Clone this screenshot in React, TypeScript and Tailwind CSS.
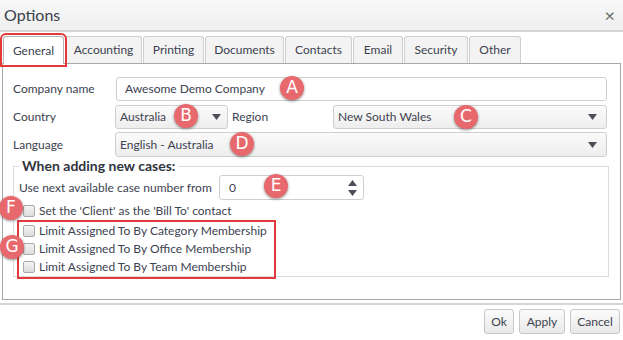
import React from "react";

const Marker = ({ l, x, y }: { l: string; x: number; y: number }) => (
  <div
    className="absolute w-[24px] h-[24px] rounded-full bg-[#e8696d] text-white flex items-center justify-center text-[17px] shadow-[0_1px_3px_rgba(0,0,0,0.45)]"
    style={{ left: x - 12, top: y - 12, fontFamily: "'DejaVu Sans', sans-serif" }}
  >
    {l}
  </div>
);

const Tri = () => (
  <svg width="9" height="6" viewBox="0 0 9 6" className="shrink-0">
    <path d="M0 0 L9 0 L4.5 6 Z" fill="#4a4f5a" />
  </svg>
);

const Check = () => (
  <div className="w-[12px] h-[12px] rounded-[2px] border border-[#a9a9a9] bg-gradient-to-b from-[#f4f4f4] to-[#dcdcdc] shrink-0" />
);

const tabs: [string, string][] = [
  ["General", "w-[61px]"],
  ["Accounting", "w-[77px]"],
  ["Printing", "w-[61px]"],
  ["Documents", "w-[79px]"],
  ["Contacts", "w-[67px]"],
  ["Email", "w-[50px]"],
  ["Security", "w-[64px]"],
  ["Other", "w-[52px]"],
];

const buttons: [string, string][] = [
  ["Ok", "w-[30px]"],
  ["Apply", "w-[46px]"],
  ["Cancel", "w-[50px]"],
];

export default function App() {
  return (
    <div
      className="relative w-[623px] h-[340px] bg-white text-[#3d4250] text-[12px] whitespace-nowrap overflow-hidden"
      style={{ fontFamily: "Lato, 'Liberation Sans', sans-serif" }}
    >
      {/* title bar */}
      <div className="h-[32px] flex items-center justify-between pl-[4px] pr-[8px] bg-gradient-to-b from-[#f8f8f8] to-[#efefef] border-b-2 border-[#d4d4d4]">
        <span className="text-[16px] text-[#3a3f4a]">Options</span>
        <span className="text-[18px] text-[#6a6a6a] leading-none">×</span>
      </div>

      {/* tabs */}
      <div className="flex pl-[3px] mt-[3px] h-[28px] items-end gap-[1px]">
        {tabs.map(([t, w], i) => (
          <div
            key={t}
            className={
              i === 0
                ? `${w} h-[28px] flex items-center justify-center bg-white border border-b-0 border-[#b5b5b5] rounded-t-[3px] relative z-10 -mb-[1px] outline-2 outline-[#e53935] outline-offset-[1px]`
                : `${w} h-[27px] flex items-center justify-center bg-[#f3f3f3] border border-b-0 border-[#cfcfcf] rounded-t-[3px]`
            }
          >
            {t}
          </div>
        ))}
      </div>

      {/* panel */}
      <div className="mx-[2px] h-[237px] border border-[#a8a8a8] pt-[13px] pl-[10px] pr-[13px]">
        <div className="flex items-center h-[24px]">
          <div className="w-[103px]">Company name</div>
          <div className="flex-1 h-[24px] border border-[#cfcfcf] rounded-[3px] px-[8px] flex items-center">
            Awesome Demo Company
          </div>
        </div>
        <div className="flex items-center h-[24px] mt-[4px]">
          <div className="w-[102px]">Country</div>
          <div className="w-[113px] h-[24px] border border-[#cfcfcf] rounded-[3px] pl-[4px] pr-[6px] flex items-center justify-between bg-gradient-to-b from-[#fafafa] to-[#eeeeee]">
            <span>Australia</span>
            <Tri />
          </div>
          <div className="w-[105px] pl-[4px]">Region</div>
          <div className="flex-1 h-[24px] border border-[#cfcfcf] rounded-[3px] pl-[4px] pr-[9px] flex items-center justify-between bg-gradient-to-b from-[#fafafa] to-[#eeeeee]">
            <span>New South Wales</span>
            <Tri />
          </div>
        </div>
        <div className="flex items-center h-[25px] mt-[3px]">
          <div className="w-[102px]">Language</div>
          <div className="flex-1 h-[25px] border border-[#cfcfcf] rounded-[3px] pl-[4px] pr-[9px] flex items-center justify-between bg-gradient-to-b from-[#fafafa] to-[#eeeeee]">
            <span>English - Australia</span>
            <Tri />
          </div>
        </div>

        <fieldset className="mt-[1px] mr-[-2px] h-[119px] border border-[#dcdcdc] pl-[5px] pr-[5px]">
          <legend className="px-[3px] ml-0 font-bold text-[14px] text-[#2f3440] leading-[16px]">
            When adding new cases:
          </legend>
          <div className="flex items-center mt-[1px] h-[25px]">
            <span className="w-[200px]">Use next available case number from</span>
            <div className="w-[145px] h-[25px] border border-[#cfcfcf] rounded-[3px] pl-[9px] pr-[6px] flex items-center justify-between">
              <span>0</span>
              <svg width="9" height="16" viewBox="0 0 9 16">
                <path d="M0 6 L4.5 0 L9 6 Z" fill="#4a4f5a" />
                <path d="M0 10 L9 10 L4.5 16 Z" fill="#4a4f5a" />
              </svg>
            </div>
          </div>
          <div className="mt-[1px] flex flex-col pl-[4px]">
            <div className="flex items-center gap-[4px] h-[19px]">
              <Check />
              <span>Set the 'Client' as the 'Bill To' contact</span>
            </div>
            <div className="relative -ml-[6px] w-[259px] border-2 border-[#e0393e] pl-[4px] pb-[1px]">
              {[
                "Limit Assigned To By Category Membership",
                "Limit Assigned To By Office Membership",
                "Limit Assigned To By Team Membership",
              ].map((s) => (
                <div key={s} className="flex items-center gap-[4px] h-[18px]">
                  <Check />
                  <span>{s}</span>
                </div>
              ))}
            </div>
          </div>
        </fieldset>
      </div>

      {/* separator */}
      <div className="mt-[3px] border-t-2 border-[#d6d6d6]" />

      {/* buttons */}
      <div className="flex justify-end gap-[5px] pr-[3px] mt-[4px]">
        {buttons.map(([b, w]) => (
          <div
            key={b}
            className={`${w} h-[25px] flex items-center justify-center border border-[#c8c8c8] rounded-[3px] bg-gradient-to-b from-[#fbfbfb] to-[#e9e9e9]`}
          >
            {b}
          </div>
        ))}
      </div>

      <Marker l="A" x={292} y={88} />
      <Marker l="B" x={186} y={116} />
      <Marker l="C" x={466} y={117} />
      <Marker l="D" x={242} y={144} />
      <Marker l="E" x={276} y={186} />
      <Marker l="F" x={11} y={208} />
      <Marker l="G" x={12} y={247} />
    </div>
  );
}
